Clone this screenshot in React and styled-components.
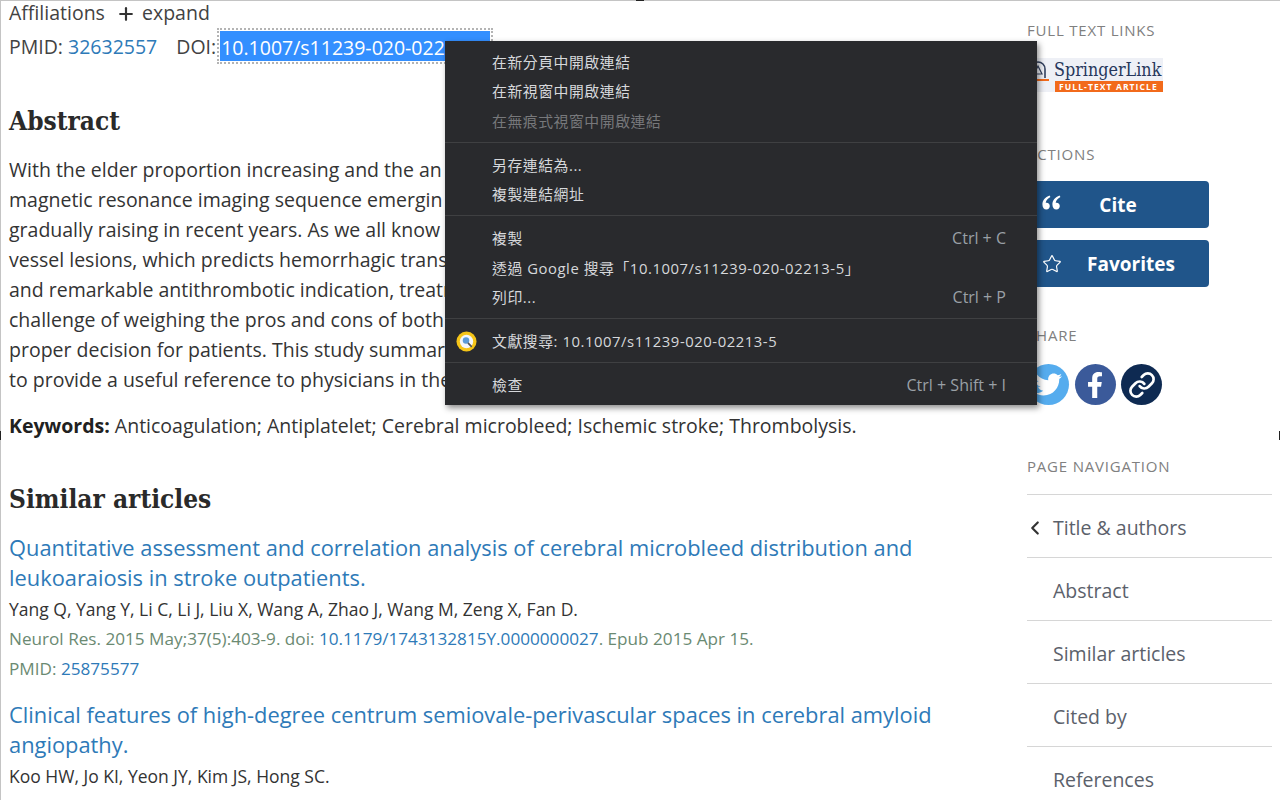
import React from 'react'
import styled, { createGlobalStyle } from 'styled-components'
import { FaTwitter, FaFacebookF } from 'react-icons/fa'
import { LuChevronLeft, LuPlus, LuLink, LuStar } from 'react-icons/lu'

const sans = `"Open Sans", "Noto Sans CJK TC", sans-serif`

const GlobalStyle = createGlobalStyle`
  html, body { margin: 0; padding: 0; background: #fff; }
  body { font-family: ${sans}; color: #212121; overflow: hidden; }
`

const abstractLines = [
  'With the elder proportion increasing and the an',
  'magnetic resonance imaging sequence emergin',
  'gradually raising in recent years. As we all know',
  'vessel lesions, which predicts hemorrhagic trans',
  'and remarkable antithrombotic indication, treatr',
  'challenge of weighing the pros and cons of both',
  'proper decision for patients. This study summari',
  'to provide a useful reference to physicians in the',
]

const similar = [
  {
    title: 'Quantitative assessment and correlation analysis of cerebral microbleed distribution and leukoaraiosis in stroke outpatients.',
    authors: 'Yang Q, Yang Y, Li C, Li J, Liu X, Wang A, Zhao J, Wang M, Zeng X, Fan D.',
    journal: 'Neurol Res. 2015 May;37(5):403-9. doi: ',
    doi: '10.1179/1743132815Y.0000000027',
    tail: '. Epub 2015 Apr 15.',
    pmid: '25875577',
  },
  {
    title: 'Clinical features of high-degree centrum semiovale-perivascular spaces in cerebral amyloid angiopathy.',
    authors: 'Koo HW, Jo KI, Yeon JY, Kim JS, Hong SC.',
    journal: 'J Neurol Sci. 2016 Jun 15;367:89-94. doi: ',
    doi: '10.1016/j.jns.2016.05.040',
    tail: '. Epub 2016 May 20.',
  },
]

const navItems = ['Abstract', 'Similar articles', 'Cited by', 'References']

const menuGroups = [
  [
    { label: '在新分頁中開啟連結' },
    { label: '在新視窗中開啟連結' },
    { label: '在無痕式視窗中開啟連結', disabled: true },
  ],
  [{ label: '另存連結為...' }, { label: '複製連結網址' }],
  [
    { label: '複製', keys: 'Ctrl + C' },
    { label: '透過 Google 搜尋「10.1007/s11239-020-02213-5」' },
    { label: '列印...', keys: 'Ctrl + P' },
  ],
  [{ label: '文獻搜尋: 10.1007/s11239-020-02213-5', icon: true }],
  [{ label: '檢查', keys: 'Ctrl + Shift + I' }],
]

const App = () => {
  return (
    <Page>
      <GlobalStyle />
      <Main>
        <TopRow>
          Affiliations <PlusIcon size={20} strokeWidth={2.6} /> expand
        </TopRow>
        <IdRow>
          PMID: <Link>32632557</Link>
          <DoiLabel>DOI:</DoiLabel>
          <SelectedDoi>10.1007/s11239-020-02213-5</SelectedDoi>
        </IdRow>

        <AbstractHeading>Abstract</AbstractHeading>
        <AbstractBody>
          {abstractLines.map((line) => (
            <Line key={line}>{line}</Line>
          ))}
        </AbstractBody>
        <Keywords>
          <strong>Keywords:</strong> Anticoagulation; Antiplatelet; Cerebral microbleed; Ischemic stroke; Thrombolysis.
        </Keywords>

        <SimilarHeading>Similar articles</SimilarHeading>
        {similar.map((item) => (
          <Article key={item.title}>
            <ArticleTitle>{item.title}</ArticleTitle>
            <Authors>{item.authors}</Authors>
            <Citation>
              {item.journal}
              <Link>{item.doi}</Link>
              {item.tail}
            </Citation>
            {item.pmid && (
              <Citation>
                PMID: <Link>{item.pmid}</Link>
              </Citation>
            )}
          </Article>
        ))}
      </Main>

      <Sidebar>
        <SideLabel>FULL TEXT LINKS</SideLabel>
        <Logo>
          <LogoTop>
            <svg width="22" height="23" viewBox="0 0 22 23">
              <path d="M4 20 V11 a7 7 0 0 1 14 0 V20" fill="none" stroke="#33415f" strokeWidth="1.6" />
              <path d="M7 16 l4 -8 4 8 Z" fill="none" stroke="#33415f" strokeWidth="1.2" />
              <rect x="1" y="21" width="21" height="2" fill="#f26a1b" />
            </svg>
            <LogoName>SpringerLink</LogoName>
          </LogoTop>
          <LogoStrip>FULL-TEXT ARTICLE</LogoStrip>
        </Logo>

        <ActionsLabel>ACTIONS</ActionsLabel>
        <ActionButton>
          <ButtonIcon>
            <svg width="19" height="15" viewBox="0 0 19 15" fill="currentColor">
              <path d="M7.6 0.4 C3.2 2 0.4 5.2 0.4 9.4 C0.4 12.4 2 14.4 4.4 14.4 C6.4 14.4 7.8 13 7.8 11 C7.8 9 6.5 7.7 4.6 7.7 C4.2 7.7 3.9 7.8 3.7 7.8 C4.1 5.6 5.8 3.6 8.4 2.1 Z" />
              <path d="M17.6 0.4 C13.2 2 10.4 5.2 10.4 9.4 C10.4 12.4 12 14.4 14.4 14.4 C16.4 14.4 17.8 13 17.8 11 C17.8 9 16.5 7.7 14.6 7.7 C14.2 7.7 13.9 7.8 13.7 7.8 C14.1 5.6 15.8 3.6 18.4 2.1 Z" />
            </svg>
          </ButtonIcon>
          Cite
        </ActionButton>
        <ActionButton $shift="26px">
          <ButtonIcon>
            <LuStar size={20} strokeWidth={1.4} />
          </ButtonIcon>
          Favorites
        </ActionButton>

        <ShareLabel>SHARE</ShareLabel>
        <ShareRow>
          <ShareCircle $bg="#55acee"><FaTwitter size={27} /></ShareCircle>
          <ShareCircle $bg="#3b5a9a"><FaFacebookF size={26} /></ShareCircle>
          <ShareCircle $bg="#0e2a52"><LuLink size={28} strokeWidth={2.3} /></ShareCircle>
        </ShareRow>

        <NavLabel>PAGE NAVIGATION</NavLabel>
        <NavList>
          <NavItem>
            <Chevron size={22} strokeWidth={2.4} />
            Title &amp; authors
          </NavItem>
          {navItems.map((item) => (
            <NavItem key={item}>{item}</NavItem>
          ))}
        </NavList>
      </Sidebar>

      <Menu>
        {menuGroups.map((group, index) => (
          <MenuGroup key={index}>
            {group.map((item) => (
              <MenuItem key={item.label} $disabled={item.disabled}>
                {item.icon && (
                  <MenuIcon viewBox="0 0 22 22">
                    <circle cx="11" cy="11" r="10.5" fill="#f5c518" />
                    <circle cx="11" cy="11" r="7" fill="#f3f6fa" />
                    <circle cx="10.5" cy="10" r="3.4" fill="#5b9bd8" />
                    <path d="M13 13 l3 3" stroke="#555" strokeWidth="1.8" strokeLinecap="round" />
                  </MenuIcon>
                )}
                <span>{item.label}</span>
                {item.keys && <MenuKeys>{item.keys}</MenuKeys>}
              </MenuItem>
            ))}
          </MenuGroup>
        ))}
      </Menu>

      <Frame />
      <Handle $x="636px" $y="0px" $w="8px" $h="1px" />
      <Handle $x="0px" $y="431px" $w="1px" $h="9px" />
      <Handle $x="1279px" $y="431px" $w="1px" $h="9px" />
    </Page>
  )
}

const Page = styled.div`
  position: relative;
  width: 1280px;
  height: 800px;
  overflow: hidden;
  display: grid;
  grid-template-columns: 1027px 245px;
  background: #fff;
`

const Main = styled.main`
  padding-left: 9px;
  font-size: 19.5px;
  min-width: 0;
`

const TopRow = styled.div`
  height: 30px;
  line-height: 25px;
  color: #424242;
`

const PlusIcon = styled(LuPlus)`
  vertical-align: -4px;
  margin: 0 1px 0 6px;
  color: #333;
`

const IdRow = styled.div`
  height: 30px;
  line-height: 34px;
  color: #424242;
  white-space: nowrap;
`

const Link = styled.a`
  color: #2e7ab8;
`

const DoiLabel = styled.span`
  margin-left: 19px;
`

const SelectedDoi = styled.span`
  display: inline-block;
  vertical-align: -1px;
  width: 269px;
  height: 30px;
  margin-left: 4px;
  padding-left: 1px;
  background: #338fff;
  color: #fff;
  line-height: 34px;
  outline: 2px dotted #b4b4b4;
  outline-offset: 1px;
`

const Heading = styled.h2`
  font-family: "DejaVu Serif Condensed", "DejaVu Serif", serif;
  font-weight: 700;
  font-size: 26px;
  color: #2a2a2a;
  margin: 0;
`

const AbstractHeading = styled(Heading)`
  margin-top: 41px;
  line-height: 40px;
`

const AbstractBody = styled.div`
  margin-top: 14px;
`

const Line = styled.div`
  height: 30px;
  line-height: 30px;
  white-space: nowrap;
  color: #333;
`

const Keywords = styled.p`
  margin: 16px 0 0;
  line-height: 30px;
  color: #333;
  white-space: nowrap;
  strong { font-weight: 700; color: #212121; }
`

const SimilarHeading = styled(Heading)`
  margin-top: 38px;
  line-height: 40px;
`

const Article = styled.article`
  margin-bottom: 16px;
  &:first-of-type { margin-top: 14px; }
`

const ArticleTitle = styled.a`
  display: block;
  max-width: 960px;
  font-size: 21.85px;
  line-height: 30px;
  color: #2e7ab8;
`

const Authors = styled.div`
  margin-top: 1px;
  font-size: 17.5px;
  line-height: 30px;
  color: #333;
`

const Citation = styled.div`
  font-size: 17.15px;
  line-height: 30px;
  color: #6b8a72;
`

const Sidebar = styled.aside`
  min-width: 0;
`

const SideLabel = styled.div`
  font-size: 15px;
  letter-spacing: 0.8px;
  line-height: 20px;
  color: #808080;
  padding-top: 20px;
  white-space: nowrap;
`

const Logo = styled.div`
  margin-top: 18px;
  width: 136px;
  height: 34px;
  background: #eef0f6;
  display: flex;
  flex-direction: column;
  overflow: hidden;
`

const LogoTop = styled.div`
  height: 23px;
  display: flex;
  align-items: center;
  gap: 5px;
`

const LogoName = styled.span`
  font-family: "DejaVu Serif Condensed", "Liberation Serif", serif;
  font-size: 17.8px;
  color: #26375c;
`

const LogoStrip = styled.div`
  margin-left: 28px;
  height: 11px;
  background: #f26a1b;
  color: #fff;
  font-size: 8.5px;
  font-weight: 700;
  letter-spacing: 1.1px;
  line-height: 11px;
  padding-left: 4px;
  white-space: nowrap;
`

const ActionsLabel = styled(SideLabel)`
  padding-top: 52px;
`

const ActionButton = styled.button`
  display: flex;
  align-items: center;
  justify-content: center;
  position: relative;
  width: 182px;
  height: 47px;
  margin-top: 12px;
  padding: 0 0 0 ${(props) => props.$shift || '0'};
  border: 0;
  border-radius: 4px;
  background: #20558a;
  color: #fff;
  font-family: ${sans};
  font-size: 19px;
  font-weight: 700;
  &:first-of-type { margin-top: 17px; }
`

const ButtonIcon = styled.span`
  position: absolute;
  left: 15px;
  top: 14px;
  display: flex;
`

const ShareLabel = styled(SideLabel)`
  padding-top: 38px;
`

const ShareRow = styled.div`
  display: flex;
  gap: 5.5px;
  margin-top: 19px;
  margin-left: 1px;
`

const ShareCircle = styled.span`
  width: 41px;
  height: 41px;
  border-radius: 50%;
  background: ${(props) => props.$bg};
  color: #fff;
  display: flex;
  align-items: center;
  justify-content: center;
`

const NavLabel = styled(SideLabel)`
  padding-top: 51px;
`

const NavList = styled.nav`
  margin-top: 18px;
  border-top: 1px solid #d6d6d6;
`

const NavItem = styled.a`
  position: relative;
  display: block;
  height: 62px;
  line-height: 66px;
  padding-left: 26px;
  border-bottom: 1px solid #d6d6d6;
  font-size: 19.5px;
  color: #5b616b;
`

const Chevron = styled(LuChevronLeft)`
  position: absolute;
  left: -3px;
  top: 22px;
  color: #333;
`

const Menu = styled.div`
  position: absolute;
  left: 445px;
  top: 41px;
  width: 592px;
  height: 364px;
  background: #292a2d;
  box-shadow: 2px 3px 6px rgba(0, 0, 0, 0.45);
`

const MenuGroup = styled.div`
  padding: 8px 0 5.5px;
  border-bottom: 1px solid #3f4042;
  &:first-child { padding-top: 6.5px; }
  &:last-child { border-bottom: 0; }
`

const MenuItem = styled.div`
  position: relative;
  display: flex;
  justify-content: space-between;
  height: 29.5px;
  line-height: 29.5px;
  padding: 0 31px 0 47px;
  white-space: nowrap;
  color: ${(props) => (props.$disabled ? '#77787b' : '#d6d8db')};
  font-size: 14.85px;
  letter-spacing: 0.55px;
`

const MenuKeys = styled.span`
  color: #9aa0a6;
  font-size: 16px;
  letter-spacing: 0;
`

const MenuIcon = styled.svg`
  position: absolute;
  left: 11px;
  top: 4px;
  width: 21px;
  height: 21px;
`

const Frame = styled.div`
  position: absolute;
  inset: 0;
  border-top: 1px solid #c4c4c4;
  border-left: 1px solid #c4c4c4;
  pointer-events: none;
`

const Handle = styled.span`
  position: absolute;
  left: ${(props) => props.$x};
  top: ${(props) => props.$y};
  width: ${(props) => props.$w};
  height: ${(props) => props.$h};
  background: #222;
`

export default App
